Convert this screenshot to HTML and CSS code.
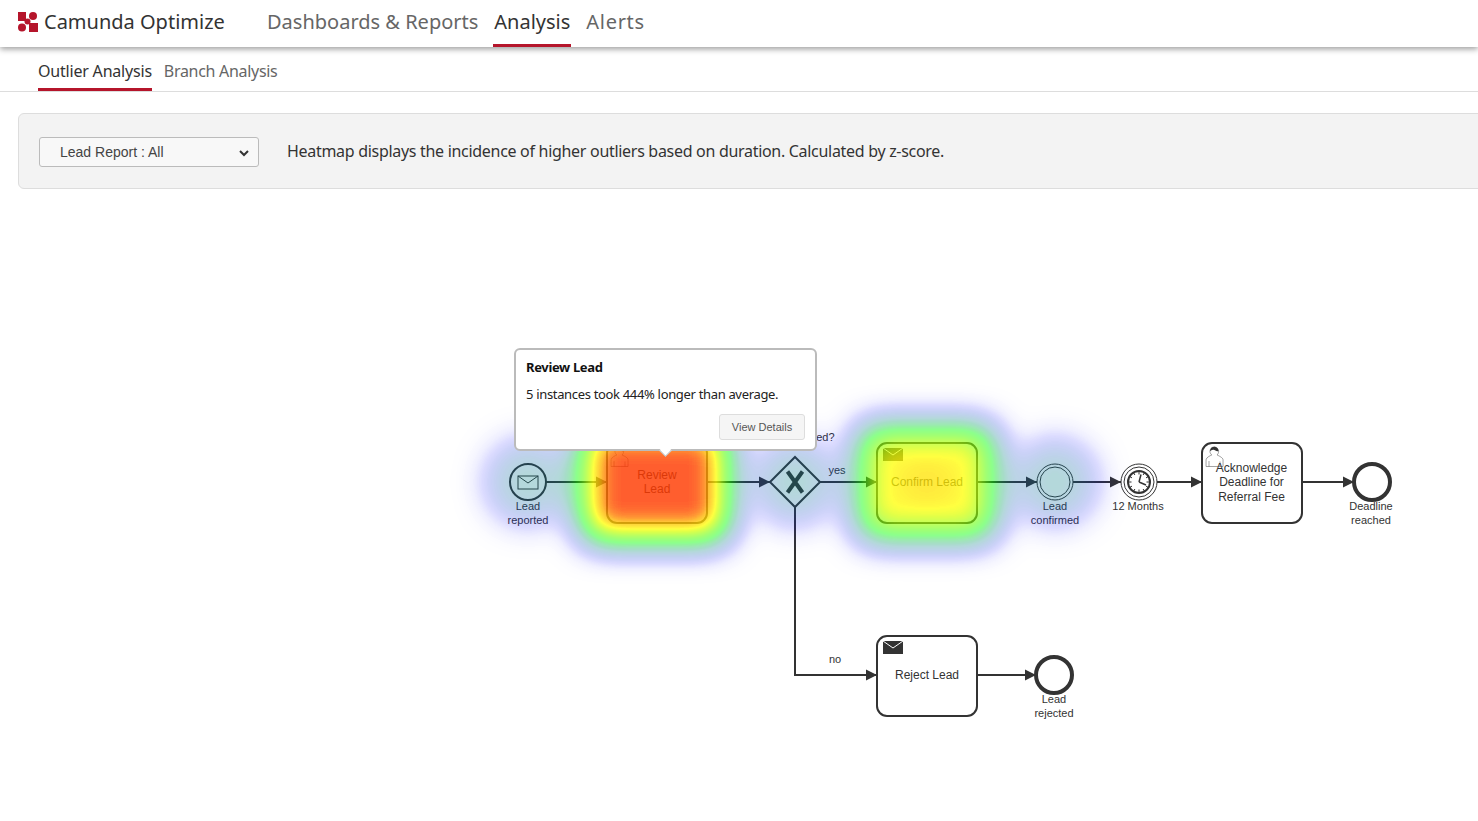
FILE: index.html
```html
<!DOCTYPE html>
<html lang="en">
<head>
    <meta charset="UTF-8">
    <title>Camunda Optimize</title>
    <link rel="stylesheet" href="styles.css">
</head>
<body>
    <header class="top-bar">
        <div class="brand">
            <svg class="brand-logo" width="20" height="20" viewBox="0 0 20 20">
                <rect x="0" y="0" width="8" height="9" fill="#b5152b"/>
                <rect x="11" y="11" width="9" height="9" fill="#b5152b"/>
                <circle cx="15" cy="4" r="4" fill="#b5152b"/>
                <circle cx="4" cy="15.5" r="4" fill="#b5152b"/>
                <circle cx="9.5" cy="9.5" r="3" fill="#b5152b"/>
            </svg>
            <span>Camunda Optimize</span>
        </div>
        <nav class="main-nav">
            <a class="main-link">Dashboards &amp; Reports</a>
            <a class="main-link active">Analysis</a>
            <a class="main-link wide">Alerts</a>
        </nav>
    </header>

    <nav class="sub-nav">
        <a class="sub-link active">Outlier Analysis</a>
        <a class="sub-link">Branch Analysis</a>
    </nav>

    <section class="control-panel">
        <div class="select-wrap">
            <select class="report-select">
                <option>Lead Report : All</option>
            </select>
            <svg class="select-arrow" width="10" height="7" viewBox="0 0 10 7">
                <path d="M1 1 L5 5 L9 1" fill="none" stroke="#333" stroke-width="2"/>
            </svg>
        </div>
        <p class="panel-text">Heatmap displays the incidence of higher outliers based on duration. Calculated by z-score.</p>
    </section>

    <main class="diagram">
        <svg class="diagram-svg" width="1478" height="632" viewBox="0 189 1478 632">
            <defs>
                <marker id="arrow" markerUnits="userSpaceOnUse" markerWidth="12" markerHeight="12" refX="11" refY="6" orient="auto">
                    <path d="M0 0.5 L11 6 L0 11.5 Z" fill="#333"/>
                </marker>
                <filter id="heat" filterUnits="userSpaceOnUse" x="400" y="340" width="800" height="300" color-interpolation-filters="sRGB">
                    <feGaussianBlur stdDeviation="17"/>
                    <feColorMatrix type="matrix" values="0 0 0 1 0  0 0 0 1 0  0 0 0 1 0  0 0 0 1 0"/>
                    <feComponentTransfer>
                        <feFuncR type="table" tableValues="0 0 0 0 0 0 0 0 0 0 0 0.17 0.33 0.5 0.67 0.83 1 1 1 1 1"/>
                        <feFuncG type="table" tableValues="0 0 0 0.12 0.25 0.37 0.5 0.62 0.75 0.87 1 1 1 1 1 1 1 0.85 0.7 0.45 0.23"/>
                        <feFuncB type="table" tableValues="1 1 1 0.87 0.75 0.62 0.5 0.37 0.25 0.12 0 0 0 0 0 0 0 0 0 0 0"/>
                        <feFuncA type="table" tableValues="0 0.06 0.14 0.2 0.24 0.27 0.3 0.35 0.38 0.42 0.45 0.5 0.55 0.6 0.66 0.72 0.75 0.77 0.79 0.8 0.82"/>
                    </feComponentTransfer>
                </filter>
            </defs>

            <g class="flows">
                <path d="M546 482 H607" marker-end="url(#arrow)"/>
                <path d="M707 482 H770" marker-end="url(#arrow)"/>
                <path d="M820 482 H877" marker-end="url(#arrow)"/>
                <path d="M977 482 H1037" marker-end="url(#arrow)"/>
                <path d="M1073 482 H1121" marker-end="url(#arrow)"/>
                <path d="M1157 482 H1202" marker-end="url(#arrow)"/>
                <path d="M1302 482 H1354" marker-end="url(#arrow)"/>
                <path d="M795 507 V675 H877" marker-end="url(#arrow)"/>
                <path d="M977 675 H1036" marker-end="url(#arrow)"/>
            </g>

            <!-- start event -->
            <circle class="event" cx="528" cy="482" r="18"/>
            <rect class="envelope" x="518" y="476" width="20" height="13"/>
            <path class="envelope" d="M518 476 L528 483 L538 476"/>

            <!-- tasks -->
            <rect class="task" x="607" y="443" width="100" height="80" rx="10"/>
            <g transform="translate(607 443)">
                <path class="user-body" d="M15 12 c0.909,-0.845 1.594,-2.049 1.594,-3.385 0,-2.554 -1.805,-4.622 -4.357,-4.622 -2.552,0 -4.288,2.068 -4.288,4.622 0,1.348 0.974,2.562 1.896,3.405 -0.529,0.187 -5.669,2.097 -5.794,4.756 v6.718 h17 v-6.718 c0,-2.298 -5.528,-4.595 -6.051,-4.776 z m-8,6 l0,5.5 m11,0 l0,-5"/>
                <path class="user-hair" d="M8.1 8.2 c0,0 2.251,-2.358 4.274,-1.177 2.024,1.181 4.221,1.537 4.124,0.965 -0.098,-0.57 -0.117,-3.791 -4.191,-4.136 -3.575,0.001 -4.208,3.367 -4.207,4.348 z"/>
            </g>
            <text class="task-label" x="657" y="479">Review</text>
            <text class="task-label" x="657" y="493">Lead</text>

            <rect class="task" x="877" y="443" width="100" height="80" rx="10"/>
            <rect class="send-icon" x="883" y="448" width="20" height="13"/>
            <path class="send-flap" d="M883 448 L893 455 L903 448"/>
            <text class="task-label" x="927" y="486">Confirm Lead</text>

            <rect class="task" x="1202" y="443" width="100" height="80" rx="10"/>
            <g transform="translate(1202 443)">
                <path class="user-body" d="M15 12 c0.909,-0.845 1.594,-2.049 1.594,-3.385 0,-2.554 -1.805,-4.622 -4.357,-4.622 -2.552,0 -4.288,2.068 -4.288,4.622 0,1.348 0.974,2.562 1.896,3.405 -0.529,0.187 -5.669,2.097 -5.794,4.756 v6.718 h17 v-6.718 c0,-2.298 -5.528,-4.595 -6.051,-4.776 z m-8,6 l0,5.5 m11,0 l0,-5"/>
                <path class="user-hair" d="M8.1 8.2 c0,0 2.251,-2.358 4.274,-1.177 2.024,1.181 4.221,1.537 4.124,0.965 -0.098,-0.57 -0.117,-3.791 -4.191,-4.136 -3.575,0.001 -4.208,3.367 -4.207,4.348 z"/>
            </g>
            <text class="task-label" x="1251.5" y="472">Acknowledge</text>
            <text class="task-label" x="1251.5" y="486">Deadline for</text>
            <text class="task-label" x="1251.5" y="501">Referral Fee</text>

            <rect class="task" x="877" y="636" width="100" height="80" rx="10"/>
            <rect class="send-icon" x="883" y="641" width="20" height="13"/>
            <path class="send-flap" d="M883 641 L893 648 L903 641"/>
            <text class="task-label" x="927" y="679">Reject Lead</text>

            <!-- gateway -->
            <path class="gateway" d="M795 457 L820 482 L795 507 L770 482 Z"/>
            <path class="gateway-x" d="M787.5 471.5 L802.5 492.5 M802.5 471.5 L787.5 492.5"/>
            <text class="small-label" x="796" y="441">Lead Qualified?</text>
            <text class="small-label" x="837" y="474">yes</text>
            <text class="small-label" x="835" y="663">no</text>

            <!-- intermediate events -->
            <circle class="event-thin" cx="1055" cy="482" r="18"/>
            <circle class="event-thin" cx="1055" cy="482" r="15"/>

            <circle class="event-thin" cx="1139" cy="482" r="18"/>
            <circle class="event-thin" cx="1139" cy="482" r="15"/>
            <circle class="clock" cx="1139" cy="482" r="11"/>
            <path class="clock-ticks" d="M1139 471.5 v3 M1139 489.5 v3 M1128.5 482 h3 M1146.5 482 h3 M1133.7 473 l1.2 2 M1143.1 489 l1.2 2 M1130 476.7 l2 1.2 M1146 486.1 l2 1.2 M1144.3 473 l-1.2 2 M1134.9 489 l-1.2 2 M1148 476.7 l-2 1.2 M1132 486.1 l-2 1.2"/>
            <path class="clock-hands" d="M1139 482 L1141 474.5 M1139 482 L1146 485"/>

            <!-- end events -->
            <circle class="event-end" cx="1372" cy="482" r="18"/>
            <circle class="event-end" cx="1054" cy="675" r="18"/>

            <!-- event labels -->
            <text class="small-label" x="528" y="510">Lead</text>
            <text class="small-label" x="528" y="524">reported</text>
            <text class="small-label" x="1055" y="510">Lead</text>
            <text class="small-label" x="1055" y="524">confirmed</text>
            <text class="small-label" x="1138" y="510">12 Months</text>
            <text class="small-label" x="1371" y="510">Deadline</text>
            <text class="small-label" x="1371" y="524">reached</text>
            <text class="small-label" x="1054" y="703">Lead</text>
            <text class="small-label" x="1054" y="717">rejected</text>

            <!-- heatmap sits over the diagram -->
            <g filter="url(#heat)">
                <circle cx="528" cy="482" r="42" fill="#fff" fill-opacity="0.3"/>
                <circle cx="795" cy="482" r="42" fill="#fff" fill-opacity="0.3"/>
                <circle cx="1055" cy="482" r="42" fill="#fff" fill-opacity="0.3"/>
                <rect x="580" y="423" width="150" height="120" rx="20" fill="#fff"/>
                <rect x="856" y="424" width="141" height="117" rx="20" fill="#fff" fill-opacity="0.8"/>
                <ellipse cx="927" cy="482" rx="30" ry="20" fill="#fff" fill-opacity="0.3"/>
            </g>
        </svg>

        <div class="tooltip">
            <h4 class="tooltip-title">Review Lead</h4>
            <p class="tooltip-text">5 instances took 444% longer than average.</p>
            <div class="tooltip-actions">
                <button class="tooltip-button">View Details</button>
            </div>
        </div>
    </main>
</body>
</html>
```

FILE: styles.css
```css
body {
    margin: 0;
    font-family: "Noto Sans", sans-serif;
    color: #333;
    background: #fff;
    overflow: hidden;
    height: 821px;
}

.top-bar {
    display: flex;
    align-items: stretch;
    height: 47px;
    padding-left: 18px;
    background: #fff;
    box-shadow: 0 2px 6px rgba(0, 0, 0, 0.4);
    position: relative;
}

.brand {
    display: flex;
    align-items: center;
    gap: 6px;
    width: 249px;
    padding-bottom: 4px;
    font-size: 20px;
    color: #333;
}

.brand-logo {
    display: block;
}

.main-nav {
    display: flex;
    gap: 15px;
}

.main-link {
    display: flex;
    align-items: center;
    justify-content: center;
    font-size: 20px;
    color: #666;
    border-bottom: 3px solid transparent;
    box-sizing: border-box;
    padding-bottom: 1px;
}

.main-link.active {
    width: 78px;
    color: #333;
    border-bottom-color: #b5152b;
}

.main-link.wide {
    letter-spacing: 0.7px;
}

.sub-nav {
    display: flex;
    gap: 12px;
    height: 44px;
    padding-left: 38px;
    border-bottom: 1px solid #ddd;
}

.sub-link {
    display: flex;
    align-items: center;
    padding-top: 6px;
    font-size: 16px;
    letter-spacing: -0.2px;
    color: #666;
    border-bottom: 3px solid transparent;
}

.sub-link + .sub-link {
    letter-spacing: -0.3px;
}

.sub-link.active {
    color: #333;
    border-bottom-color: #b5152b;
}

.control-panel {
    display: flex;
    align-items: center;
    gap: 28px;
    height: 76px;
    box-sizing: border-box;
    margin: 21px -30px 0 18px;
    padding-left: 20px;
    background: #f3f3f3;
    border: 1px solid #ddd;
    border-radius: 6px;
}

.select-wrap {
    position: relative;
    margin-top: 2px;
}

.report-select {
    display: block;
    width: 220px;
    height: 30px;
    padding-left: 20px;
    font-family: "Liberation Sans", sans-serif;
    font-size: 14px;
    color: #444;
    background: #f8f8f8;
    border: 1px solid #bbb;
    border-radius: 3px;
    appearance: none;
}

.select-arrow {
    position: absolute;
    right: 10px;
    top: 13px;
}

.panel-text {
    margin: 0;
    font-size: 16px;
    letter-spacing: -0.3px;
    color: #333;
}

.diagram {
    position: relative;
}

.diagram-svg {
    display: block;
}

.flows path {
    fill: none;
    stroke: #333;
    stroke-width: 2px;
}

.event {
    fill: #fff;
    stroke: #333;
    stroke-width: 2px;
}

.event-thin {
    fill: #fff;
    stroke: #333;
    stroke-width: 1px;
}

.event-end {
    fill: #fff;
    stroke: #333;
    stroke-width: 4px;
}

.envelope {
    fill: none;
    stroke: #333;
    stroke-width: 1px;
}

.task {
    fill: #fff;
    stroke: #333;
    stroke-width: 2px;
}

.send-icon {
    fill: #333;
}

.send-flap {
    fill: none;
    stroke: #fff;
    stroke-width: 1px;
}

.user-body {
    fill: #fff;
    stroke: #444;
    stroke-width: 0.5px;
}

.user-hair {
    fill: #333;
}

.gateway {
    fill: #fff;
    stroke: #333;
    stroke-width: 2px;
}

.gateway-x {
    fill: none;
    stroke: #333;
    stroke-width: 4px;
}

.clock {
    fill: #fff;
    stroke: #333;
    stroke-width: 2px;
}

.clock-ticks {
    stroke: #333;
    stroke-width: 1px;
}

.clock-hands {
    stroke: #333;
    stroke-width: 1.5px;
}

.task-label {
    font-family: "Liberation Sans", sans-serif;
    font-size: 12px;
    text-anchor: middle;
    fill: #333;
}

.small-label {
    font-family: "Liberation Sans", sans-serif;
    font-size: 11px;
    text-anchor: middle;
    fill: #333;
}

.tooltip {
    position: absolute;
    left: 514px;
    top: 159px;
    width: 303px;
    height: 103px;
    box-sizing: border-box;
    padding: 8px 10px 0;
    background: #fff;
    border: 2px solid #bbb;
    border-radius: 6px;
}

.tooltip::after {
    content: "";
    position: absolute;
    left: 145px;
    bottom: -6px;
    width: 8px;
    height: 8px;
    background: #fff;
    border-right: 1px solid #bbb;
    border-bottom: 1px solid #bbb;
    transform: rotate(45deg);
}

.tooltip-title {
    margin: 0 0 9px;
    font-size: 13px;
    font-weight: 700;
    letter-spacing: -0.35px;
    line-height: 18px;
    color: #111;
}

.tooltip-text {
    margin: 0;
    font-size: 13px;
    letter-spacing: -0.33px;
    line-height: 18px;
    color: #222;
}

.tooltip-actions {
    display: flex;
    justify-content: flex-end;
    margin-top: 11px;
}

.tooltip-button {
    width: 86px;
    height: 26px;
    padding: 0;
    font-family: "Liberation Sans", sans-serif;
    font-size: 11px;
    color: #555;
    background: #f5f5f5;
    border: 1px solid #ddd;
    border-radius: 3px;
}
```
